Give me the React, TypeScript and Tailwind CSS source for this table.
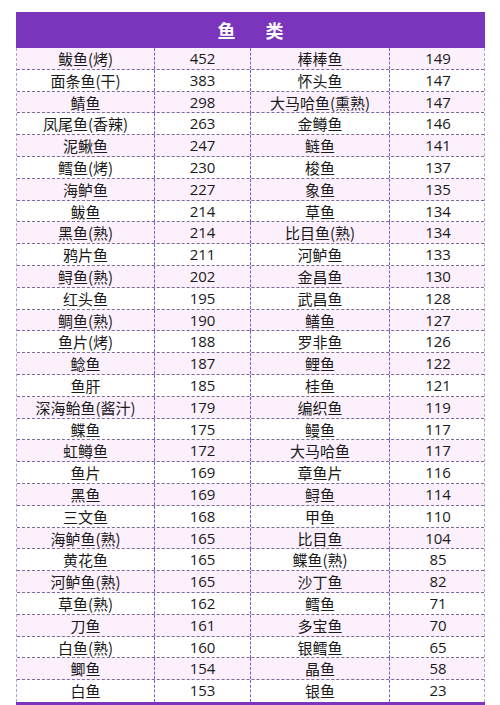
import React from "react";

const left: [string, string][] = [
  ["鲅鱼(烤)", "452"], ["面条鱼(干)", "383"], ["鲭鱼", "298"], ["凤尾鱼(香辣)", "263"], ["泥鳅鱼", "247"],
  ["鳕鱼(烤)", "230"], ["海鲈鱼", "227"], ["鲅鱼", "214"], ["黑鱼(熟)", "214"], ["鸦片鱼", "211"],
  ["鲟鱼(熟)", "202"], ["红头鱼", "195"], ["鲷鱼(熟)", "190"], ["鱼片(烤)", "188"], ["鲶鱼", "187"],
  ["鱼肝", "185"], ["深海鲐鱼(酱汁)", "179"], ["鲽鱼", "175"], ["虹鳟鱼", "172"], ["鱼片", "169"],
  ["黑鱼", "169"], ["三文鱼", "168"], ["海鲈鱼(熟)", "165"], ["黄花鱼", "165"], ["河鲈鱼(熟)", "165"],
  ["草鱼(熟)", "162"], ["刀鱼", "161"], ["白鱼(熟)", "160"], ["鲫鱼", "154"], ["白鱼", "153"],
];
const right: [string, string][] = [
  ["棒棒鱼", "149"], ["怀头鱼", "147"], ["大马哈鱼(熏熟)", "147"], ["金鳟鱼", "146"], ["鲢鱼", "141"],
  ["梭鱼", "137"], ["象鱼", "135"], ["草鱼", "134"], ["比目鱼(熟)", "134"], ["河鲈鱼", "133"],
  ["金昌鱼", "130"], ["武昌鱼", "128"], ["鳝鱼", "127"], ["罗非鱼", "126"], ["鲤鱼", "122"],
  ["桂鱼", "121"], ["编织鱼", "119"], ["鳗鱼", "117"], ["大马哈鱼", "117"], ["章鱼片", "116"],
  ["鲟鱼", "114"], ["甲鱼", "110"], ["比目鱼", "104"], ["鲽鱼(熟)", "85"], ["沙丁鱼", "82"],
  ["鳕鱼", "71"], ["多宝鱼", "70"], ["银鳕鱼", "65"], ["晶鱼", "58"], ["银鱼", "23"],
];

export default function App() {
  return (
    <div className="w-[500px] h-[705px] bg-white pt-[12px] pl-[16px] overflow-hidden" style={{ fontFamily: '"Noto Sans CJK SC", "Noto Sans", sans-serif' }}>
      <div className="w-[469px]">
        <div className="h-[36px] bg-[#7a35bc] flex items-center justify-center gap-[30px] text-white text-[18px] font-bold">
          <span>鱼</span>
          <span>类</span>
        </div>
        <div className="border-l border-dashed border-[#b79ad6] border-r">
          {left.map((l, i) => {
            const r = right[i];
            const bg = i % 2 === 0 ? "bg-[#fcf0fc]" : "bg-white";
            const last = i === left.length - 1;
            return (
              <div
                key={i}
                className={`grid grid-cols-[138px_96px_139px_96px] h-[21.8px] text-[15px] leading-[21px] text-[#1a1a1a] ${bg} ${last ? "" : "border-b border-dashed border-[#7c6a99]"}`}
              >
                <div className="text-center border-r border-dashed border-[#8a55c4] whitespace-nowrap">{l[0]}</div>
                <div className="text-center border-r border-dashed border-[#8a55c4]" style={{ fontFamily: '"Open Sans", "Noto Sans", sans-serif' }}>{l[1]}</div>
                <div className="text-center border-r border-dashed border-[#8a55c4] whitespace-nowrap">{r[0]}</div>
                <div className="text-center" style={{ fontFamily: '"Open Sans", "Noto Sans", sans-serif' }}>{r[1]}</div>
              </div>
            );
          })}
        </div>
        <div className="h-[4px] bg-[#7a35bc]" />
      </div>
    </div>
  );
}
